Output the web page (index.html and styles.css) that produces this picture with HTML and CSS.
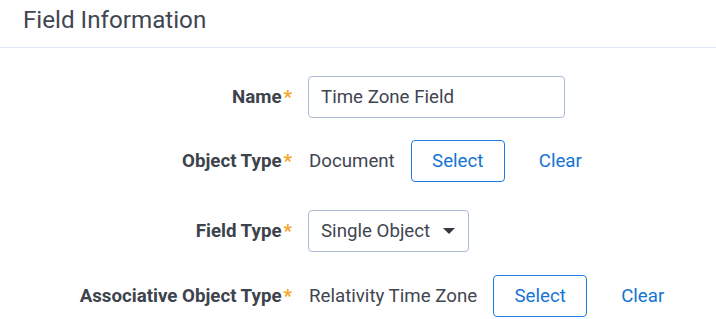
FILE: index.html
```html
<!DOCTYPE html>
<html>
<head>
<meta charset="utf-8">
<link rel="stylesheet" href="styles.css">
</head>
<body>
<div class="panel">
  <div class="panel-header"><h2 class="panel-title">Field Information</h2></div>
  <div class="form">
    <div class="row row-name">
      <div class="label">Name<span class="req">*</span></div>
      <div class="value"><div class="input">Time Zone Field</div></div>
    </div>
    <div class="row row-obj">
      <div class="label">Object Type<span class="req">*</span></div>
      <div class="value">
        <span class="text">Document</span>
        <button class="btn">Select</button>
        <button class="link">Clear</button>
      </div>
    </div>
    <div class="row row-ft">
      <div class="label">Field Type<span class="req">*</span></div>
      <div class="value">
        <div class="select"><span>Single Object</span><span class="caret"></span></div>
      </div>
    </div>
    <div class="row row-assoc">
      <div class="label">Associative Object Type<span class="req">*</span></div>
      <div class="value">
        <span class="text">Relativity Time Zone</span>
        <button class="btn">Select</button>
        <button class="link">Clear</button>
      </div>
    </div>
  </div>
</div>
</body>
</html>
```

FILE: styles.css
```css
html, body { margin: 0; padding: 0; background: #fff; }
body { font-family: Roboto, "Open Sans", Arial, sans-serif; color: #3e4550; overflow: hidden; }
.panel { width: 716px; }
.panel-header { height: 47px; border-bottom: 1px solid #dfe7f4; display: flex; align-items: center; padding-left: 23px; }
.panel-title { margin: 0; font-size: 24.2px; font-weight: 400; color: #3f4651; line-height: 1; position: relative; top: -3px; }
.form { display: grid; grid-template-columns: 292px auto; column-gap: 16px; padding-top: 28px; }
.row { display: contents; }
.label { font-weight: 700; font-size: 18.7px; color: #3d434c; text-align: right; height: 42px; line-height: 42px; white-space: nowrap; }
.req { color: #f5a623; margin-left: 2px; font-weight: 700; }
.value { display: flex; align-items: center; height: 42px; }
.row-obj .label, .row-obj .value { margin-top: 22px; }
.row-ft .label, .row-ft .value { margin-top: 28px; }
.row-assoc .label, .row-assoc .value { margin-top: 23px; }
.input { box-sizing: border-box; width: 257px; height: 42px; border: 1px solid #a9bbd6; border-radius: 4px; padding: 0 12px; font-size: 18.7px; line-height: 40px; color: #3f4651; }
.text { font-size: 18.7px; color: #3f4651; margin-right: 16px; margin-left: 1px; }
.btn { box-sizing: border-box; height: 42px; width: 94px; border: 1px solid #1b7ce0; border-radius: 4px; background: #fff; color: #1574d4; font-family: inherit; font-size: 18.7px; padding: 0; cursor: pointer; }
.link { border: 0; background: none; color: #1574d4; font-family: inherit; font-size: 18.7px; padding: 0; margin-left: 34px; }
.select { box-sizing: border-box; width: 161px; height: 42px; border: 1px solid #a9bbd6; border-radius: 4px; padding: 0 12px; display: flex; align-items: center; justify-content: space-between; font-size: 18.7px; color: #3f4651; }
.caret { width: 0; height: 0; border-left: 6px solid transparent; border-right: 6px solid transparent; border-top: 6px solid #333a44; margin-right: 1px; }
```
